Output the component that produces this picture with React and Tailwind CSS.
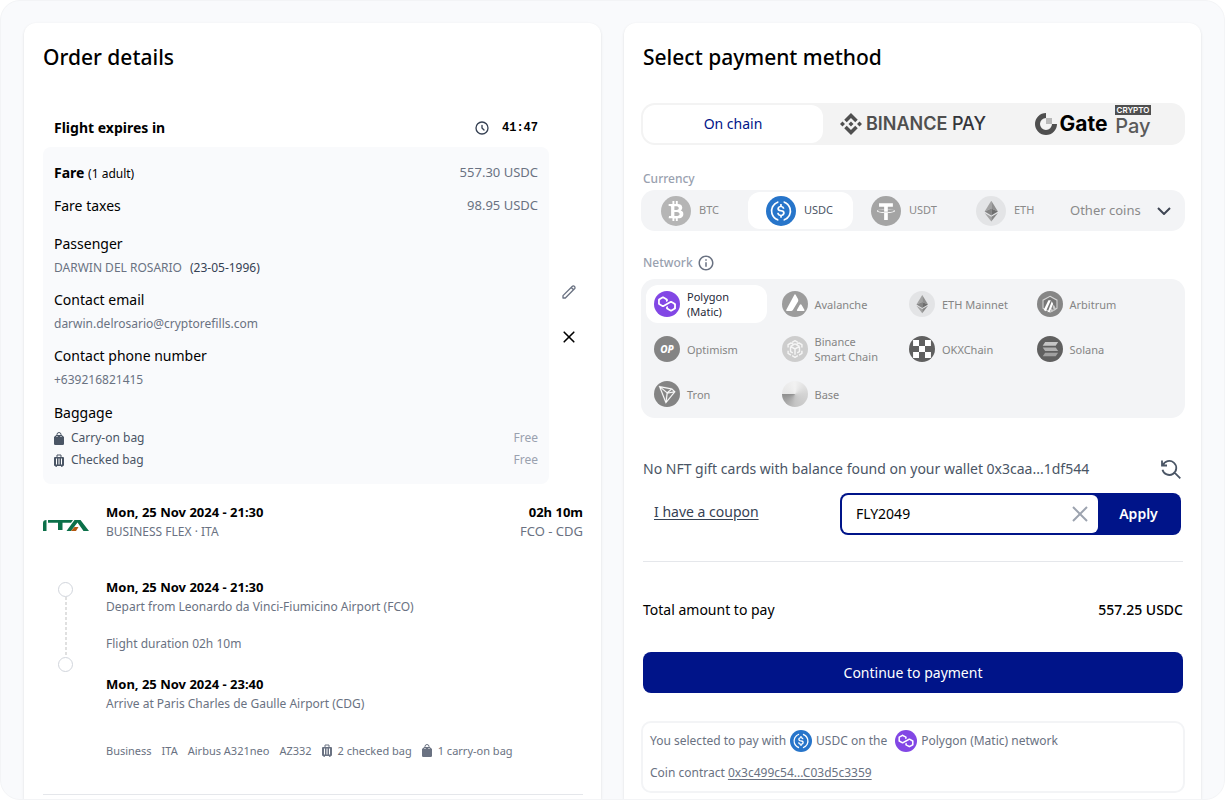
import { useState } from "react";
import { FaBtc } from "react-icons/fa";
import { HiOutlineClock, HiOutlinePencil, HiOutlineX } from "react-icons/hi";
import { MdInfoOutline } from "react-icons/md";
import { SiBinance } from "react-icons/si";

const BtcIcon = ({ className }) => (
    <span className={`flex items-center justify-center rounded-full bg-[#b5b5b5] text-white ${className}`}>
        <FaBtc className="size-5" />
    </span>
);

const UsdcIcon = ({ className }) => (
    <svg viewBox="0 0 32 32" className={className}>
        <circle cx="16" cy="16" r="16" fill="#2775ca" />
        <g fill="#fff">
            <path d="M20.022 18.124c0-2.124-1.28-2.852-3.84-3.156-1.828-.243-2.193-.728-2.193-1.578 0-.85.61-1.396 1.828-1.396 1.097 0 1.707.364 2.011 1.275a.458.458 0 00.427.303h.975a.416.416 0 00.427-.425v-.06a3.04 3.04 0 00-2.743-2.489V9.142c0-.243-.183-.425-.487-.486h-.915c-.243 0-.426.182-.487.486v1.396c-1.829.242-2.986 1.456-2.986 2.974 0 2.002 1.218 2.791 3.778 3.095 1.707.303 2.255.668 2.255 1.639 0 .97-.853 1.638-2.011 1.638-1.585 0-2.133-.667-2.316-1.578-.06-.242-.244-.364-.427-.364h-1.036a.416.416 0 00-.426.425v.06c.243 1.518 1.219 2.61 3.23 2.914v1.457c0 .242.183.425.487.485h.915c.243 0 .426-.182.487-.485V21.34c1.829-.303 3.047-1.578 3.047-3.217z" />
            <path d="M12.892 24.497c-4.754-1.7-7.192-6.98-5.424-11.653.914-2.55 2.925-4.491 5.424-5.402.244-.121.365-.303.365-.607v-.85c0-.242-.121-.424-.365-.485-.061 0-.183 0-.244.06a10.895 10.895 0 00-7.13 13.717c1.096 3.4 3.717 6.01 7.13 7.102.244.121.488 0 .548-.243.061-.06.061-.122.061-.243v-.85c0-.182-.182-.424-.365-.546zm6.46-18.936c-.244-.122-.488 0-.548.242-.061.061-.061.122-.061.243v.85c0 .243.182.485.365.607 4.754 1.7 7.192 6.98 5.424 11.653-.914 2.55-2.925 4.491-5.424 5.402-.244.121-.365.303-.365.607v.85c0 .242.121.424.365.485.061 0 .183 0 .244-.06a10.895 10.895 0 007.13-13.717c-1.096-3.46-3.778-6.07-7.13-7.162z" />
        </g>
    </svg>
);

const UsdtIcon = ({ className }) => (
    <svg viewBox="0 0 32 32" className={className}>
        <circle cx="16" cy="16" r="16" fill="#a4a4a4" />
        <path fill="#fff" d="M17.922 17.383v-.002c-.11.008-.677.042-1.942.042-1.01 0-1.721-.03-1.971-.042v.003c-3.888-.171-6.79-.848-6.79-1.658 0-.809 2.902-1.486 6.79-1.66v2.644c.254.018.982.061 1.988.061 1.207 0 1.812-.05 1.925-.06v-2.643c3.88.173 6.775.85 6.775 1.658 0 .81-2.895 1.485-6.775 1.657m0-3.59v-2.366h5.414V7.819H8.595v3.608h5.414v2.365c-4.4.202-7.709 1.074-7.709 2.118 0 1.044 3.309 1.915 7.709 2.118v7.582h3.913v-7.584c4.393-.202 7.694-1.073 7.694-2.116 0-1.043-3.301-1.914-7.694-2.117" />
    </svg>
);

const EthIcon = ({ className }) => (
    <svg viewBox="0 0 32 32" className={className}>
        <circle cx="16" cy="16" r="16" fill="#e3e4e6" />
        <path fill="#a3a3a3" d="M16.3 5L9.2 16.6l7.1-3.2z" />
        <path fill="#8f8f8f" d="M16.3 5v8.4l7.1 3.2z" />
        <path fill="#858585" d="M9.2 16.6l7.1 4.2v-7.4z" />
        <path fill="#6e6e6e" d="M23.4 16.6l-7.1-3.2v7.4z" />
        <path fill="#a3a3a3" d="M9.2 18l7.1 9.3v-5.1z" />
        <path fill="#878787" d="M16.3 22.2v5.1L23.4 18z" />
    </svg>
);

const PolygonIcon = ({ className }) => (
    <svg viewBox="0 0 32 32" className={className}>
        <circle cx="16" cy="16" r="16" fill="#8247e5" />
        <path fill="#fff" transform="translate(-1.6 -1.6) scale(1.1)" d="M21.092 12.693c-.369-.215-.848-.215-1.254 0l-2.879 1.654-1.955 1.078-2.879 1.653c-.369.216-.848.216-1.254 0l-2.288-1.294c-.369-.215-.627-.61-.627-1.042V12.19c0-.431.221-.826.627-1.042l2.25-1.258c.37-.216.85-.216 1.256 0l2.25 1.258c.37.216.628.611.628 1.042v1.654l1.955-1.115v-1.653a1.16 1.16 0 00-.627-1.042l-4.17-2.372c-.369-.216-.848-.216-1.254 0l-4.244 2.372A1.16 1.16 0 006 11.076v4.78c0 .432.221.827.627 1.043l4.244 2.372c.369.215.849.215 1.254 0l2.879-1.618 1.955-1.114 2.879-1.617c.369-.216.848-.216 1.254 0l2.251 1.258c.37.215.627.61.627 1.042v2.552c0 .431-.22.826-.627 1.042l-2.25 1.294c-.37.216-.85.216-1.255 0l-2.251-1.258c-.37-.216-.628-.611-.628-1.042v-1.654l-1.955 1.115v1.653c0 .431.221.827.627 1.042l4.244 2.372c.369.216.848.216 1.254 0l4.244-2.372c.369-.215.627-.61.627-1.042v-4.78a1.16 1.16 0 00-.627-1.042l-4.28-2.409z" />
    </svg>
);

const AvalancheIcon = ({ className }) => (
    <svg viewBox="0 0 32 32" className={className}>
        <circle cx="16" cy="16" r="16" fill="#9c9c9c" />
        <path fill="#fff" d="M14.9 5.1q1.1-1.9 2.2 0l2.6 4.7q.8 1.5 0 3l-6.3 10.7q-.8 1.2-2.2 1.2H6.3q-1.9 0-1-1.700zM22 17q1-1.600 2 0l3.500 6q.9 1.700-1 1.700h-7q-1.900 0-1-1.700z" />
    </svg>
);

const ArbitrumIcon = ({ className }) => (
    <svg viewBox="0 0 32 32" className={className}>
        <circle cx="16" cy="16" r="16" fill="#868686" />
        <path fill="#777" stroke="#d6d6d6" strokeWidth="1.300" d="M16 6.500l8.600 4.800v10L16 26l-8.600-4.700v-10z" />
        <path fill="#fff" d="M14 11.500h3L11 25l-2.800-1.600zM18.200 12.500l1.700 3.500-4 9.500-2.900.5z" />
        <path fill="#c9c9c9" d="M20.600 16.500l3.200 6.200-2.400 1.500-2.300-4.500zM18.200 20.800l2 4.200-2.800 1-.9-1.700z" />
    </svg>
);

const OptimismIcon = ({ className }) => (
    <span className={`flex items-center justify-center rounded-full bg-[#848484] text-[10px] leading-none font-extrabold text-white italic ${className}`}>
        OP
    </span>
);

const BscIcon = ({ className }) => (
    <svg viewBox="0 0 32 32" className={className} fill="none" stroke="#f5f5f5" strokeWidth="1.800" strokeLinejoin="round">
        <circle cx="16" cy="16" r="16" fill="#cdcdcd" stroke="none" />
        <path d="M12.500 7.800L16 5.800l3.500 2M7.500 14v-3.500L11 8.600l3.500 2M24.500 14v-3.500L21 8.600l-3.500 2M7.500 18v3.500l3.500 2M24.500 18v3.500l-3.500 2M12.500 24.200l3.500 2 3.500-2" />
        <path d="M10.500 12.800l5.500 3.200 5.500-3.200M16 16v7M10.500 12.800v6.400l2.800 1.600M21.500 12.800v6.400l-2.800 1.600M10.500 12.800L16 9.700l5.500 3.100" />
    </svg>
);

const OkxIcon = ({ className }) => (
    <svg viewBox="0 0 32 32" className={className}>
        <circle cx="16" cy="16" r="16" fill="#606060" />
        <path fill="#fff" d="M5 5h7.300v7.300H5zM19.700 5H27v7.300h-7.300zM12.300 12.300h7.400v7.400h-7.400zM5 19.700h7.300V27H5zM19.700 19.700H27V27h-7.300z" />
    </svg>
);

const SolanaIcon = ({ className }) => (
    <svg viewBox="0 0 32 32" className={className}>
        <circle cx="16" cy="16" r="16" fill="#606060" />
        <path fill="#c6c6c6" d="M10 7.500h16L23 12H7z" />
        <path fill="#b0b0b0" d="M7 14h16l3 4.500H10z" />
        <path fill="#a0a0a0" d="M10 20.500h16L23 25H7z" />
    </svg>
);

const TronIcon = ({ className }) => (
    <svg viewBox="0 0 32 32" className={className}>
        <circle cx="16" cy="16" r="16" fill="#848484" />
        <path fill="#fff" stroke="#fff" strokeWidth=".3" transform="translate(-2.400 -1.900) scale(1.120)" d="M21.932 9.913L7.5 7.257l7.595 19.112 10.583-12.894-3.746-3.562zm-.232 1.17l2.208 2.099-6.038 1.093 3.83-3.192zm-5.142 2.973l-6.364-5.278 10.402 1.914-4.038 3.364zm-.453.934l-1.038 8.58L9.472 9.487l6.633 5.502zm.96.455l6.687-1.21-7.67 9.343.983-8.133z" />
    </svg>
);

const BaseIcon = ({ className }) => (
    <span className={`rounded-full bg-[conic-gradient(from_270deg,#e6e6e6,#f2f2f2_25%,#d4d4d4_50%,#c4c4c4_75%,#8e8e8e)] ${className}`} />
);

const CarryOnIcon = ({ className }) => (
    <svg viewBox="0 0 10 13" className={className}>
        <path d="M3 3.500V2.500a2 2 0 014 0v1" fill="none" stroke="currentColor" />
        <path fill="currentColor" d="M2.200 3h5.600L10 5v6.700q0 1.300-1.300 1.300H1.300Q0 13 0 11.700V5z" />
        <path d="M2.500 4.500h1M6.500 4.500h1" stroke="#fff" />
    </svg>
);

const CheckedIcon = ({ className }) => (
    <svg viewBox="0 0 10 13" className={className}>
        <path d="M3 3V1h4v2" fill="none" stroke="currentColor" />
        <path fill="currentColor" d="M1 3h8q1 0 1 1v7q0 1-1 1H8.500v1H7.200v-1H2.800v1H1.500v-1H1q-1 0-1-1V4q0-1 1-1z" />
        <path d="M2.500 4.500v6M5 4.500v6M7.500 4.500v6" stroke="#fff" />
    </svg>
);

const ItaLogo = () => (
    <svg viewBox="0 0 46 13" role="img" aria-label="ITA Airways" className="h-[13px] w-[46px]">
        <path fill="#0b7049" d="M0 12V4Q0 1 3.500 1v11zM5 1h25l-2 2.800h-8.500V11H15V3.800H5zM31.500 1h6L46 12h-5.500L34.500 3.500 28 12h-4.500z" />
        <path fill="#b4560f" d="M31.500 8h4L33 12h-5z" />
    </svg>
);

const GateLogo = () => (
    <svg viewBox="0 0 22 22" className="size-[22px]">
        <path fill="none" stroke="#4f4f4f" strokeWidth="5" d="M11 2.500a8.500 8.500 0 108.500 8.500" />
        <path fill="#b9b9b9" d="M11 5h6v6h-6z" />
    </svg>
);

const currencies = [
    { name: "BTC", Icon: BtcIcon },
    { name: "USDC", Icon: UsdcIcon },
    { name: "USDT", Icon: UsdtIcon },
    { name: "ETH", Icon: EthIcon },
];

const networks = [
    { name: "Polygon (Matic)", Icon: PolygonIcon },
    { name: "Avalanche", Icon: AvalancheIcon },
    { name: "ETH Mainnet", Icon: EthIcon },
    { name: "Arbitrum", Icon: ArbitrumIcon },
    { name: "Optimism", Icon: OptimismIcon },
    { name: "Binance Smart Chain", Icon: BscIcon },
    { name: "OKXChain", Icon: OkxIcon },
    { name: "Solana", Icon: SolanaIcon },
    { name: "Tron", Icon: TronIcon },
    { name: "Base", Icon: BaseIcon },
];

const contacts = [
    { label: "Passenger", value: "DARWIN DEL ROSARIO", extra: "(23-05-1996)" },
    { label: "Contact email", value: "darwin.delrosario@cryptorefills.com" },
    { label: "Contact phone number", value: "+639216821415" },
];

const OrderDetails = () => (
    <section className="min-w-0 flex-1 rounded-t-xl bg-white pt-[18px] pr-[18px] pl-[19px] shadow-sm">
        <h2 className="text-[21px] leading-8 font-medium">Order details</h2>

        <div className="mt-9 flex">
            <div className="min-w-0 flex-1">
                <div className="flex h-[38px] items-center justify-between px-[11px]">
                    <h3 className="text-sm font-bold">Flight expires in</h3>
                    <div className="flex items-center gap-3">
                        <HiOutlineClock className="size-4 text-gray-700" />
                        <span className="font-['Liberation_Mono',monospace] text-xs font-bold">41:47</span>
                    </div>
                </div>

                <div className="rounded-lg bg-[#f9fafc] px-[11px] pt-[14px] pb-[13px] text-sm leading-6">
                    <div className="flex justify-between">
                        <p><span className="font-bold">Fare</span> <span className="text-xs">(1 adult)</span></p>
                        <p className="text-[13px] leading-[22px] text-gray-500">557.30 USDC</p>
                    </div>
                    <div className="mt-[9px] flex justify-between">
                        <p>Fare taxes</p>
                        <p className="text-[13px] leading-[22px] text-gray-500">98.95 USDC</p>
                    </div>
                    <dl className="mt-[14px] space-y-2">
                        {contacts.map(({ label, value, extra }) => (
                            <div key={label}>
                                <dt>{label}</dt>
                                <dd className="flex gap-2 text-xs leading-6 text-gray-500">
                                    <span>{value}</span>
                                    {extra && <span className="text-gray-700">{extra}</span>}
                                </dd>
                            </div>
                        ))}
                    </dl>
                    <h3 className="mt-[9px]">Baggage</h3>
                    <ul className="pt-[2px] text-xs leading-[22px] text-gray-600">
                        <li className="flex items-center gap-[7px]">
                            <CarryOnIcon className="h-[13px] w-[10px]" />
                            <span>Carry-on bag</span>
                            <span className="ml-auto text-gray-400">Free</span>
                        </li>
                        <li className="flex items-center gap-[7px]">
                            <CheckedIcon className="h-[13px] w-[10px]" />
                            <span>Checked bag</span>
                            <span className="ml-auto text-gray-400">Free</span>
                        </li>
                    </ul>
                </div>
            </div>

            <div className="flex w-[34px] flex-col items-end justify-center gap-[29px] pt-[36px] pr-[6px]">
                <button type="button" aria-label="Edit passenger">
                    <HiOutlinePencil className="size-4 text-gray-500" />
                </button>
                <button type="button" aria-label="Remove passenger">
                    <HiOutlineX className="size-4 scale-120" />
                </button>
            </div>
        </div>

        <div className="mt-[19px] flex text-xs leading-[19px] text-gray-500">
            <div className="flex w-[63px] items-center pt-[6px]"><ItaLogo /></div>
            <div>
                <p className="text-[13px] font-bold text-black">Mon, 25 Nov 2024 - 21:30</p>
                <p>BUSINESS FLEX · ITA</p>
            </div>
            <div className="ml-auto text-right">
                <p className="text-[13px] font-bold text-black">02h 10m</p>
                <p className="text-[13px]">FCO - CDG</p>
            </div>
        </div>

        <div className="mt-[37px] flex text-xs leading-[19px] text-gray-500">
            <div className="flex w-[45px] shrink-0 flex-col items-center pt-1">
                <span className="size-[15px] rounded-full border border-gray-300" />
                <svg viewBox="0 0 2 60" className="h-[60px] w-[2px]" stroke="#e0e0e0" strokeWidth="2" strokeDasharray="3 2">
                    <path d="M1 0v60" />
                </svg>
                <span className="size-[15px] rounded-full border border-gray-300" />
            </div>
            <div className="pl-[18px]">
                <p className="text-[13px] font-bold text-black">Mon, 25 Nov 2024 - 21:30</p>
                <p>Depart from Leonardo da Vinci-Fiumicino Airport (FCO)</p>
                <p className="mt-[18px]">Flight duration 02h 10m</p>
                <p className="mt-[22px] text-[13px] font-bold text-black">Mon, 25 Nov 2024 - 23:40</p>
                <p>Arrive at Paris Charles de Gaulle Airport (CDG)</p>
                <ul className="mt-[28px] flex gap-[10px] text-[11px]">
                    <li>Business</li>
                    <li>ITA</li>
                    <li>Airbus A321neo</li>
                    <li>AZ332</li>
                    <li className="flex items-center gap-[6px]">
                        <CheckedIcon className="h-[13px] w-[10px]" />
                        2 checked bag
                    </li>
                    <li className="flex items-center gap-[6px]">
                        <CarryOnIcon className="h-[13px] w-[10px]" />
                        1 carry-on bag
                    </li>
                </ul>
            </div>
        </div>
        <hr className="mt-[34px] border-gray-200" />
    </section>
);

const PaymentMethod = () => {
    const [currency, setCurrency] = useState("USDC");
    const [network, setNetwork] = useState("Polygon (Matic)");
    const [coupon, setCoupon] = useState("FLY2049");

    return (
        <section className="min-w-0 flex-1 rounded-t-xl bg-white pt-[18px] pr-[18px] pl-[19px] shadow-sm">
            <h2 className="text-[21px] leading-8 font-medium">Select payment method</h2>

            <div className="-mx-[2px] mt-[30px] grid h-[42px] grid-cols-3 rounded-[14px] bg-[#f3f3f3] p-[2px]">
                <button type="button" className="rounded-xl bg-white text-sm text-[#001489]">On chain</button>
                <button type="button" className="flex items-center justify-center gap-1 font-[Inter,sans-serif] text-lg font-semibold text-[#4f4f4f]">
                    <SiBinance className="size-[22px]" />
                    <span>BINANCE <span className="font-medium text-[#33353a]">PAY</span></span>
                </button>
                <button type="button" className="flex items-center justify-center gap-[3px] font-[Inter,sans-serif] text-[21px] leading-5">
                    <GateLogo />
                    <span className="font-bold">Gate</span>
                    <span className="ml-1 flex flex-col items-center self-start text-[#5a5a5a]">
                        <span className="bg-[#4f4f4f] px-[2px] text-[8px] leading-[10px] font-semibold text-white">CRYPTO</span>
                        <span className="text-xl leading-[22px] font-medium">Pay</span>
                    </span>
                </button>
            </div>

            <h3 className="mt-[24px] text-xs leading-5 font-medium text-gray-400">Currency</h3>
            <div className="-mx-[2px] mt-px grid h-[41px] grid-cols-[repeat(4,1fr)_120px] rounded-[14px] bg-gray-100 p-[2px]">
                {currencies.map(({ name, Icon }) => (
                    <button
                        key={name}
                        type="button"
                        aria-pressed={currency === name}
                        onClick={() => setCurrency(name)}
                        className={`flex items-center gap-2 rounded-xl pl-[18px] text-[11px] ${currency === name ? "bg-white text-gray-600" : "text-[#8a8a8a]"}`}
                    >
                        <Icon className="size-[30px]" />
                        {name}
                    </button>
                ))}
                <div className="relative flex items-center">
                    <select aria-label="Other coins" className="w-full appearance-none pl-[7px] text-[13px] text-[#8a8a8a]">
                        <option>Other coins</option>
                    </select>
                    <svg viewBox="0 0 14 8" className="pointer-events-none absolute right-3 h-2 w-[14px]" fill="none" stroke="#3f4654" strokeWidth="2">
                        <path d="M1 1l6 6 6-6" />
                    </svg>
                </div>
            </div>

            <h3 className="mt-[22px] flex items-center gap-1 text-xs leading-5 font-medium text-gray-400">
                Network
                <MdInfoOutline className="size-[18px] text-gray-500" />
            </h3>
            <div className="-mx-[2px] mt-[6px] grid grid-cols-4 gap-[7px] rounded-[14px] bg-gray-100 pt-[6px] pr-9 pb-[5px] pl-[5px]">
                {networks.map(({ name, Icon }) => (
                    <button
                        key={name}
                        type="button"
                        aria-pressed={network === name}
                        onClick={() => setNetwork(name)}
                        className={`flex h-[38px] items-center gap-[7px] rounded-xl pr-3 pl-2 text-left text-[11px] leading-[15px] ${network === name ? "bg-white text-gray-800" : "text-[#858585]"}`}
                    >
                        <Icon className="size-[26px] shrink-0" />
                        {name}
                    </button>
                ))}
            </div>

            <div className="mt-[39px] flex items-center justify-between text-sm leading-6 text-gray-600">
                <p>No NFT gift cards with balance found on your wallet 0x3caa...1df544</p>
                <button type="button" aria-label="Refresh gift cards" className="mr-[2px]">
                    <svg viewBox="0 0 20 20" className="size-5" fill="none" stroke="currentColor" strokeWidth="1.800">
                        <path d="M1 1.500v5h5M1.800 6.300a7 7 0 11-.3 4.400M13.300 13.300l6 6" />
                    </svg>
                </button>
            </div>

            <div className="mt-3 mr-[2px] flex items-center justify-between pl-[11px]">
                <a href="#coupon" className="pb-1 text-sm text-gray-700 underline underline-offset-2">I have a coupon</a>
                <form className="flex h-[42px] w-[341px] rounded-lg bg-[#001489] p-[2px]" onSubmit={(e) => e.preventDefault()}>
                    <div className="flex min-w-0 flex-1 items-center rounded-md bg-white pr-2">
                        <input
                            type="text"
                            aria-label="Coupon code"
                            className="min-w-0 flex-1 pl-[14px] text-sm outline-none"
                            value={coupon}
                            onChange={(e) => setCoupon(e.target.value)}
                        />
                        <button type="button" aria-label="Clear coupon" onClick={() => setCoupon("")}>
                            <svg viewBox="0 0 20 20" className="size-5" fill="none" stroke="#9ca3af" strokeWidth="2">
                                <path d="M3 3l14 14M17 3L3 17" />
                            </svg>
                        </button>
                    </div>
                    <button type="submit" className="w-[81px] text-sm font-semibold text-white">Apply</button>
                </form>
            </div>

            <hr className="mt-[26px] border-gray-200" />

            <div className="mt-9 flex justify-between text-sm leading-6">
                <p>Total amount to pay</p>
                <p className="font-medium">557.25 USDC</p>
            </div>

            <button type="button" className="mt-[30px] h-[41px] w-full rounded-lg bg-[#001489] text-sm text-white">
                Continue to payment
            </button>

            <div className="-mx-[2px] mt-7 rounded-[10px] border-2 border-gray-100 px-[7px] pt-[6px] pb-[6px] text-xs text-gray-500">
                <p className="flex h-6 items-center">
                    You selected to pay with
                    <UsdcIcon className="mx-1 size-[22px]" />
                    USDC on the
                    <PolygonIcon className="mr-1 ml-2 size-[22px]" />
                    Polygon (Matic) network
                </p>
                <p className="mt-2 leading-6">
                    Coin contract <a href="#contract" className="underline underline-offset-2">0x3c499c54...C03d5c3359</a>
                </p>
            </div>
        </section>
    );
};

const App = () => (
    <div className="bg-white font-['Noto_Sans',sans-serif] text-black">
        <main className="flex min-h-screen gap-[23px] overflow-hidden rounded-[20px] border border-gray-100 bg-[#f9fafc] px-[23px] pt-[22px]">
            <OrderDetails />
            <PaymentMethod />
        </main>
    </div>
);

export default App;
